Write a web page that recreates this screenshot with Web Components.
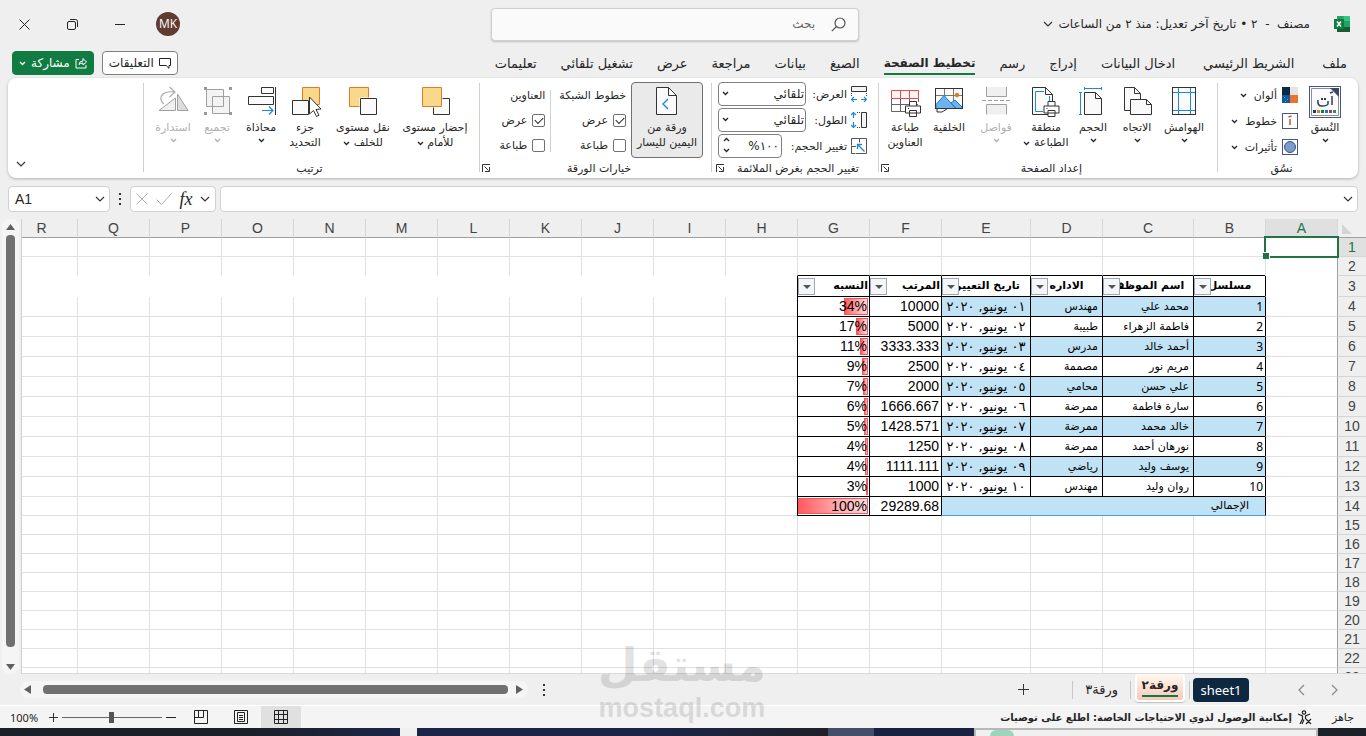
<!DOCTYPE html>
<html lang="ar" dir="rtl">
<head>
<meta charset="utf-8">
<title>مصنف ٢</title>
<style>
html,body{margin:0;height:100%}
body{font-family:"DejaVu Sans","Noto Sans",sans-serif;font-size:12px;color:#262626;background:#efefef;overflow:hidden}
</style>
</head>
<body>
<excel-app></excel-app>
<script>
const BASE = `<style>
*{box-sizing:border-box}
button,input,select{font:inherit;color:inherit;margin:0;padding:0;border:0;background:none}
button{display:flex;align-items:center;justify-content:center;white-space:nowrap}
a{color:inherit;text-decoration:none}
:host{display:block}
</style>`;
function define(name, html, setup) {
  const t = document.createElement('template');
  t.innerHTML = BASE + html;
  customElements.define(name, class extends HTMLElement {
    constructor() {
      super();
      this.attachShadow({mode: 'open'});
    }
    connectedCallback() {
      if (this.shadowRoot.firstChild) return;
      this.shadowRoot.append(t.content.cloneNode(true));
      if (setup) setup(this, this.shadowRoot);
    }
  });
}

/* ---- icons: [width, height, markup] ---- */
const printer = (x, y) => `<g transform="translate(${x} ${y})" fill="#fff" stroke="#333"><path d="M4.500 5V.500h7V5M.500 5h15v7H.500zM4.500 9.500h7v6h-7z"/><path d="M3 7.500h1"/></g>`;
const ICONS = {
  excel: [16,16,'<path d="M3 0h13v16H3z" fill="#21a366"/><path d="M9.500 0H16v5H9.500z" fill="#33c481"/><path d="M3 5h6.500v6H3z" fill="#107c41"/><path d="M3 11h13v5H3z" fill="#185c37"/><path d="M0 3h10v10H0z" fill="#107c41"/><path d="M3 5.500l4 5M7 5.500l-4 5" stroke="#fff" stroke-width="1.500"/>'],
  down: [10,6,'<path d="M1 1l4 4 4-4" fill="none" stroke="#333" stroke-width="1.200"/>'],
  mini: [7,5,'<path d="M1 1l2.500 2.500L6 1" fill="none" stroke="currentColor" stroke-width="1.300"/>'],
  miniup: [7,5,'<path d="M1 4l2.500-2.500L6 4" fill="none" stroke="currentColor" stroke-width="1.300"/>'],
  search: [15,15,'<g fill="none" stroke="#555" stroke-width="1.200"><circle cx="9" cy="6" r="5"/><path d="M5.500 9.500L.800 14.200"/></g>'],
  close: [11,11,'<path d="M.500.500l10 10M10.500.500l-10 10" stroke="#222"/>'],
  restore: [11,11,'<g fill="none" stroke="#222"><rect x=".500" y="2.500" width="8" height="8" rx="1.500"/><path d="M3 .500h5.500q2 0 2 2V8"/></g>'],
  min: [10,1,'<path d="M0 0h10v1H0z" fill="#222"/>'],
  share: [12,12,'<path d="M4 2.500H1v8.500h10V8M4 7.500q0-3.500 4-3.500V1.500L11.500 5 8 8V6Q5.500 6 4 7.500z" fill="none" stroke="#fff"/>'],
  comment: [12,11,'<path d="M.500.500h11v7H10v2.800L7.200 7.500H.500z" fill="none" stroke="#222"/>'],
  plus: [11,11,'<path d="M5.500 0v11M0 5.500h11" stroke="#333"/>'],
  prev: [7,12,'<path d="M6 1L1 6l5 5" fill="none" stroke="#888" stroke-width="1.200"/>'],
  next: [7,12,'<path d="M1 1l5 5-5 5" fill="none" stroke="#888" stroke-width="1.200"/>'],
  dots: [2,12,'<path d="M0 0h2v2H0zM0 5h2v2H0zM0 10h2v2H0z" fill="#333"/>'],
  cancel: [12,12,'<path d="M.500.500l11 11M11.500.500l-11 11" stroke="#b0b0b0"/>'],
  check: [16,12,'<path d="M.500 6.500l5 5L15.500.500" fill="none" stroke="#b0b0b0"/>'],
  launch: [8,8,'<path d="M.500 8V.500H8M2.500 2.500l4 4M7.500 3v4.500H3" fill="none" stroke="#333"/>'],
  themes: [32,32,'<rect x=".500" y=".500" width="31" height="31" fill="#fff" stroke="#4a5578"/><path d="M2.500 2.500h20l7 7v20h-27z" fill="#fafafa" stroke="#8890a8"/><path d="M21 2h9v9z" fill="#3c4468"/><g fill="none" stroke="#2f3a5f" stroke-width="1.500"><path d="M9 14q-1 6 4 6t6-2v-3M23 10v9M21 7l3-1"/></g><path d="M12 12h2v2h-2zM15 12h2v2h-2z" fill="#2f3a5f"/><path d="M4 24h3v3H4z" fill="#0b3d91"/><path d="M8 24h3v3H8z" fill="#e07b22"/><path d="M12 24h3v3h-3z" fill="#107c41"/><path d="M16 24h3v3h-3z" fill="#1f77c8"/><path d="M20 24h3v3h-3z" fill="#a03c64"/><path d="M24 24h3v3h-3z" fill="#3a8a50"/>'],
  colors: [16,16,'<path d="M0 0h8v8H0z" fill="#0e2841"/><path d="M8 0h8v8H8z" fill="#e4e4e4"/><path d="M0 8h8v8H0z" fill="#14589c"/><path d="M8 8h8v8H8z" fill="#e97132"/><path d="M2 10h1v1H2zM5 12h1v1H5zM3 14h1v1H3z" fill="#3c9"/>'],
  fonts: [16,16,'<rect x=".500" y=".500" width="15" height="15" fill="#fff" stroke="#4a5578"/><path d="M8 6v6M6.500 4l3-1" stroke="#c05a20" stroke-width="1.500"/>'],
  effects: [16,16,'<rect x=".500" y=".500" width="15" height="15" fill="#fff" stroke="#4a5578"/><circle cx="8" cy="8" r="5.500" fill="#7d9cc9" stroke="#2b5797"/>'],
  margins: [32,32,'<rect x="4.500" y="1.500" width="23" height="27" fill="#fafafa" stroke="#333"/><path d="M10.500 2v26M22.500 2v26M5 6.500h22M5 24.500h22" stroke="#1e88d8"/>'],
  orient: [32,32,'<g fill="#fafafa" stroke="#333"><path d="M3.500 24.500v-23h10l6 6v17z"/><path d="M13.500 1.500v6h6" fill="none"/><path d="M9.500 13.500h16l5 5v10h-21z"/><path d="M25.500 13.500v5h5" fill="none"/></g>'],
  size: [32,32,'<g fill="#fafafa" stroke="#333"><path d="M7.500 6.500h11l6 6v16h-17z"/><path d="M18.500 6.500v6h6" fill="none"/></g><path d="M7 2.500h17M7.500 1v3M24.500 1v3M3.500 6v23M2 6.500h3M2 28.500h3" stroke="#1e88d8"/>'],
  printarea: [32,32,'<path d="M2.500 1.500h13l7 7v20h-20z" fill="#fafafa" stroke="#333"/><path d="M15.500 1.500v7h7" fill="none" stroke="#333"/><path d="M14 5.500H5.500v20H13M19.500 10v5" fill="none" stroke="#1e88d8"/>' + printer(13.5,15)],
  breaks: [32,32,'<path d="M6.500 1v9.500h20V1M6.500 28.500v-10h20v10" fill="#f0f0f0" stroke="#a0a0a0"/><path d="M2 14.500h29" stroke="#a0a0a0" stroke-dasharray="4 2"/>'],
  picture: [32,32,'<rect x="2.500" y="2.500" width="27" height="20" fill="#fafafa" stroke="#333"/><path d="M11.500 3v19M20.500 3v19M3 9.500h26" stroke="#777"/><circle cx="24" cy="9" r="2.200" fill="#e07b22"/><path d="M3 18.500l8-9 12 13H3zM18 17l4-3 7 7v1.500H23z" fill="#6cb4f0" stroke="#1e78c8"/><path d="M2.500 3v19.500h27V3M4 23l0 3h5l5-3" fill="none" stroke="#333"/>'],
  titles: [32,32,'<path d="M2.500 12.500v13H16M11.500 13v12M3 18.500h26M20.500 13v5M29.500 13v3" fill="none" stroke="#666"/><path d="M2.500 4.500h27v8h-27zM11.500 5v7M20.500 5v7" fill="#fff5f5" stroke="#f04848"/>' + printer(16,15)],
  forward: [32,32,'<path d="M14.500 12.500h16v16h-16z" fill="#fafafa" stroke="#333"/><path d="M2.500 .500h21v21h-21z" fill="#fff"/><path d="M3.500 1.500h19v19h-19z" fill="#f8d98c" stroke="#e07b22"/>'],
  backward: [32,32,'<path d="M2.500 1.500h19v19h-19z" fill="#f8d98c" stroke="#e07b22"/><path d="M12.500 11.500h18v18h-18z" fill="#fff"/><path d="M13.500 12.500h16v16h-16z" fill="#fafafa" stroke="#333"/>'],
  pane: [32,32,'<path d="M13.500 1.500h17v17h-17z" fill="#f8d98c" stroke="#e07b22"/><path d="M3.500 14.500h16v14h-16z" fill="#fafafa" stroke="#333"/><path d="M20.500 11v17l4-3.500 3 6 2.500-1.300-3-5.700 5-.500z" fill="#fff" stroke="#333"/>'],
  align: [32,32,'<path d="M16.500 1.500h12v6h-12zM3.500 10.500h25v8h-25z" fill="#fafafa" stroke="#333"/><path d="M30.500 1v28" stroke="#333"/><path d="M17 24.500h11M24 20.500l4 4-4 4" fill="none" stroke="#1e88d8" stroke-width="1.200"/>'],
  group: [32,32,'<path d="M5.500 3.500h17v17h-17zM11.500 10.500h17v17h-17z" fill="#eee" fill-opacity=".7" stroke="#a0a0a0"/><path d="M3 1h3v3H3zM28 1h3v3h-3zM3 26h3v3H3zM28 26h3v3h-3z" fill="#999"/>'],
  rotate: [32,32,'<path d="M2 24.500L18.500 12v12.500z" fill="#f0f0f0" stroke="#a0a0a0"/><path d="M20.500 24.500V8l10.500 16.500z" fill="#ddd" stroke="#a0a0a0"/><path d="M7 18Q1 13 6 8q4-3 11-2M12.500 1L18 6l-5.500 5" fill="none" stroke="#aaa" stroke-width="1.200"/>'],
  rtl: [32,32,'<path d="M5.500 1.500h12l8 8v19h-20z" fill="#fafafa" stroke="#333"/><path d="M17.500 1.500v8h8" fill="none" stroke="#333"/><path d="M17 13l-5 5 5 5" fill="none" stroke="#1e88d8" stroke-width="1.400"/>'],
  wide: [16,16,'<path d="M.500.500h15v5H.500z" fill="#f4f4f4" stroke="#333"/><path d="M.500 7v1M.500 9v1M15.500 7v1M15.500 9v1" stroke="#333"/><path d="M0 13.500h6M10 13.500h6M3 11L.500 13.500 3 16M13 11l2.500 2.500L13 16" fill="none" stroke="#1e88d8" stroke-width="1.200"/>'],
  tall: [16,16,'<path d="M10.500.500h5v15h-5z" fill="#f4f4f4" stroke="#333"/><path d="M6 .500h1M8 .500h1M6 15.500h1M8 15.500h1" stroke="#333"/><path d="M2.500 0v6M2.500 10v6M0 3L2.500.500 5 3M0 13l2.500 2.500L5 13" fill="none" stroke="#1e88d8" stroke-width="1.200"/>'],
  scale: [16,16,'<path d="M.500 7.500V.500h8v4M8.500.500h7v15h-11M.500 8v7.500H4M0 8.500h5" fill="none" stroke="#555"/><path d="M13.500 13.500L6.500 6.500M6.500 11V6.500H11" fill="none" stroke="#1e88d8" stroke-width="1.300"/>'],
  normal: [14,14,'<path d="M.500.500h13v13H.500zM4.500.500v13M9.500.500v13M0 4.500h14M0 9.500h14" fill="none" stroke="#222"/>'],
  layout: [14,14,'<path d="M.500.500h13v13H.500zM3.500 2.500h7v9h-7zM5 5.500h4M5 7.500h4M5 9.500h4" fill="none" stroke="#222"/>'],
  breakview: [14,14,'<path d="M.500.500h13v13H.500zM4.500 .500v7H.500M9.500.500v7H4.500" fill="none" stroke="#222"/>'],
  access: [15,15,'<g fill="none" stroke="#222" stroke-width="1.200"><circle cx="7" cy="2.500" r="1.700"/><path d="M1 4l4.500 2v3L3 14M13 4L8.500 6v3M7 9.500L5 14M9 9l5 5M14 9l-5 5"/></g>'],
  tri: [10,10,'<path d="M0 0l10 10H0z" fill="#d4d4d4"/>'],
  up: [9,6,'<path d="M4.500 0L9 6H0z" fill="#606060"/>'],
  dn: [9,6,'<path d="M4.500 6L9 0H0z" fill="#606060"/>'],
  lf: [7,9,'<path d="M0 4.500L7 0v9z" fill="#606060"/>'],
  rt: [7,9,'<path d="M7 4.500L0 0v9z" fill="#606060"/>'],
};
define('x-icon', '<style>:host{display:inline-flex;flex:none}svg{display:block}</style>', (el, root) => {
  const [w, h, m] = ICONS[el.getAttribute('name')];
  const d = document.createElement('div');
  d.innerHTML = `<svg width="${w}" height="${h}" viewBox="0 0 ${w} ${h}" aria-hidden="true">${m}</svg>`;
  root.append(d);
});
const prependIcon = (el, root) => {
  const i = document.createElement('x-icon');
  i.setAttribute('name', el.getAttribute('icon'));
  root.querySelector('button').prepend(i);
};

/* ---- title bar ---- */
define('title-bar', `<style>
:host{display:grid;grid-template-columns:1fr 368px 1fr;align-items:center;height:48px;padding-right:16px}
.doc{display:flex;align-items:center;gap:8px;white-space:nowrap;justify-content:flex-start}
.doc button{gap:6px;white-space:pre}
.doc>x-icon{margin-left:16px}
label{display:flex;align-items:center;gap:16px;height:33px;padding:0 12px;background:#fafafa;border:1px solid #d0d0d0;border-radius:4px;box-shadow:0 1px 2px #0003}
input{flex:1;min-width:0;outline:0}input::placeholder{color:#666;opacity:1}
.win{display:flex;justify-content:flex-end;align-items:center}
.win button{width:48px;height:48px}
.av{width:24px;height:24px;border-radius:50%;background:#5f3b32;color:#fff;font-family:"Open Sans",sans-serif;display:block;line-height:24px;text-align:center}
</style>
<div class="doc"><x-icon name="excel"></x-icon><button><span>مصنف  -  ٢ • تاريخ آخر تعديل: منذ ٢ من الساعات</span><x-icon name="down"></x-icon></button></div>
<label><x-icon name="search"></x-icon><input placeholder="بحث" aria-label="بحث"></label>
<div class="win"><button><span class="av">MK</span></button><button aria-label="تصغير"><x-icon name="min"></x-icon></button><button aria-label="استعادة"><x-icon name="restore"></x-icon></button><button aria-label="إغلاق"><x-icon name="close"></x-icon></button></div>`);

/* ---- ribbon tabs ---- */
define('ribbon-tabs', `<style>
:host{display:flex;align-items:center;justify-content:space-between;height:30px;padding:0 19px 0 12px}
nav{display:flex;gap:24px}
a{height:24px;line-height:25px;font-size:13px;white-space:nowrap}
.far{margin-left:4px}
a.on{font-size:12px;font-weight:bold;border-bottom:2px solid #107c41}
.acts{display:flex;gap:8px}
.acts button{height:24px;gap:5px;padding:0 6px;border-radius:4px;border:1px solid #808080;background:#fff}
.acts .share{background:#107c41;color:#fff;border-color:#107c41}
</style>
<nav><a href="#" class="far">ملف</a><a href="#" class="far">الشريط الرئيسي</a><a href="#">ادخال البيانات</a><a href="#">إدراج</a><a href="#">رسم</a><a href="#" class="on">تخطيط الصفحة</a><a href="#">الصيغ</a><a href="#">بيانات</a><a href="#">مراجعة</a><a href="#">عرض</a><a href="#">تشغيل تلقائي</a><a href="#">تعليمات</a></nav>
<div class="acts"><button><x-icon name="comment"></x-icon>التعليقات</button><button class="share"><x-icon name="share"></x-icon>مشاركة<x-icon name="mini"></x-icon></button></div>`);

/* ---- ribbon pieces ---- */
define('ribbon-group', `<style>
:host{display:grid;grid-template-rows:76px 1fr;padding:4px 8px 0 5px;position:relative;font-size:11px}
:host::after{content:"";position:absolute;left:0;top:5px;bottom:6px;width:1px;background:#d0d0d0}
.in{display:flex}
.cap{display:flex;align-items:center;height:20px}
.cap span{flex:1;text-align:center}
:host([launcher]) .cap{margin-left:-2px}
:host([launcher]) span{padding-left:5px}
</style><div class="in"><slot></slot></div><div class="cap"><span></span></div>`, (el, root) => {
  root.querySelector('span').textContent = el.getAttribute('label');
  if (el.hasAttribute('launcher')) root.querySelector('.cap').insertAdjacentHTML('beforeend', '<button aria-label="المزيد"><x-icon name="launch"></x-icon></button>');
});
define('ribbon-button', `<style>
:host{display:block;flex:none}
button{flex-direction:column;justify-content:flex-start;width:100%;height:76px;padding-top:4px;border-radius:4px}
:host([disabled]) button{color:#b0b0b0}
:host([pressed]) button{background:#eaeaea;border:1px solid #707070;padding-top:3px}
span{line-height:15px;margin-top:2px;text-align:center}
.c{margin-top:3px}
</style><button><span><slot></slot></span></button>`, (el, root) => {
  prependIcon(el, root);
  if (el.hasAttribute('menu')) root.querySelector('button').insertAdjacentHTML('beforeend', '<x-icon class="c" name="mini"></x-icon>');
  if (el.hasAttribute('disabled')) root.querySelector('button').disabled = true;
});
define('small-button', `<style>button{gap:5px;height:26px}.m{margin-right:2px}</style><button><slot></slot><x-icon class="m" name="mini"></x-icon></button>`, prependIcon);
define('check-option', `<style>
label{display:flex;align-items:center;gap:5px;height:25px}
input{appearance:none;width:13px;height:13px;border:1px solid #707070;border-radius:2px;background:#fff;display:grid;place-items:center}
input:checked::after{content:"";width:7px;height:4px;border:solid #222;border-width:0 0 1px 1px;transform:translateY(-1px) rotate(-45deg)}
</style><label><input type="checkbox"><slot></slot></label>`, (el, root) => {
  root.querySelector('input').checked = el.hasAttribute('checked');
});
define('scale-options', `<style>
:host{flex:1;display:grid;grid-template-rows:repeat(3,24px);gap:2px}
.r{display:flex;align-items:center;gap:4px;white-space:nowrap}
.r label{flex:1}
.f{position:relative;width:88px;height:24px}
.f.n{width:64px}
select,input{appearance:none;width:100%;height:24px;border:1px solid #808080;border-radius:4px;background:#fff;padding:0 1px 0 16px;font-size:12px}
input{text-align:right;direction:ltr;padding:0 2px 0 14px}
.f>x-icon{position:absolute;left:4px;top:9px;pointer-events:none}
.sp{position:absolute;left:5px;top:3px;display:grid;gap:6px}
</style>
<div class="r"><x-icon name="wide"></x-icon><label for="w">العرض:</label><div class="f"><select id="w"><option>تلقائي</option></select><x-icon name="mini"></x-icon></div></div>
<div class="r"><x-icon name="tall"></x-icon><label for="h">الطول:</label><div class="f"><select id="h"><option>تلقائي</option></select><x-icon name="mini"></x-icon></div></div>
<div class="r"><x-icon name="scale"></x-icon><label for="s">تغيير الحجم:</label><div class="f n"><input id="s" value="%١٠٠"><div class="sp"><button aria-label="زيادة"><x-icon name="miniup"></x-icon></button><button aria-label="إنقاص"><x-icon name="mini"></x-icon></button></div></div></div>`);
define('ribbon-bar', `<style>
:host{display:flex;height:100px;margin:0 8px;background:#fff;border-radius:8px;box-shadow:0 1px 3px #0004}
.g1{width:141px;padding-right:17px}.g2{width:339px}.g3{width:167px;padding-right:11px;padding-left:7px}.g4{width:232px}.g5{width:336px}
.w50{width:50px}.w44{width:44px}.w72{width:72px}
.col{display:grid;align-content:start}
.smalls{padding-right:11px;justify-items:start}
.vsep{width:1px;background:#d0d0d0;height:62px;margin-top:8px}
.opts{padding:1px 5px 0 8px}
.opts h4{margin:0;font-weight:normal;height:25px;line-height:26px;white-space:nowrap}
.end{flex:1;display:flex;justify-content:flex-end;align-items:flex-end;padding:11px 8px}
</style>
<ribbon-group class="g1" label="نسُق"><ribbon-button icon="themes" menu>النُسق</ribbon-button><div class="col smalls"><small-button icon="colors">ألوان</small-button><small-button icon="fonts">خطوط</small-button><small-button icon="effects">تأثيرات</small-button></div></ribbon-group>
<ribbon-group class="g2" label="إعداد الصفحة" launcher>
<ribbon-button class="w50" icon="margins" menu>الهوامش</ribbon-button>
<ribbon-button class="w44" icon="orient" menu>الاتجاه</ribbon-button>
<ribbon-button class="w44" icon="size" menu>الحجم</ribbon-button>
<ribbon-button class="w50" icon="printarea">منطقة<br>الطباعة <x-icon name="mini"></x-icon></ribbon-button>
<ribbon-button class="w50" icon="breaks" menu disabled>فواصل</ribbon-button>
<ribbon-button class="w44" icon="picture">الخلفية</ribbon-button>
<ribbon-button class="w44" icon="titles">طباعة<br>العناوين</ribbon-button>
</ribbon-group>
<ribbon-group class="g3" label="تغيير الحجم بغرض الملائمة" launcher><scale-options></scale-options></ribbon-group>
<ribbon-group class="g4" label="خيارات الورقة" launcher>
<ribbon-button class="w72" icon="rtl" pressed>ورقة من<br>اليمين لليسار</ribbon-button>
<div class="col opts"><h4>خطوط الشبكة</h4><check-option checked>عرض</check-option><check-option>طباعة</check-option></div>
<div class="vsep"></div>
<div class="col opts"><h4>العناوين</h4><check-option checked>عرض</check-option><check-option>طباعة</check-option></div>
</ribbon-group>
<ribbon-group class="g5" label="ترتيب">
<ribbon-button class="w72" icon="forward">إحضار مستوى<br>للأمام <x-icon name="mini"></x-icon></ribbon-button>
<ribbon-button class="w72" icon="backward">نقل مستوى<br>للخلف <x-icon name="mini"></x-icon></ribbon-button>
<ribbon-button class="w44" icon="pane">جزء<br>التحديد</ribbon-button>
<ribbon-button class="w44" icon="align" menu>محاذاة</ribbon-button>
<ribbon-button class="w44" icon="group" menu disabled>تجميع</ribbon-button>
<ribbon-button class="w44" icon="rotate" menu disabled>استدارة</ribbon-button>
</ribbon-group>
<div class="end"><button aria-label="طي الشريط"><x-icon name="down"></x-icon></button></div>`);

/* ---- formula bar ---- */
define('formula-bar', `<style>
:host{display:flex;direction:ltr;gap:4px;padding:8px 8px 7px;align-items:stretch}
.b{display:flex;align-items:center;height:26px;background:#fff;border:1px solid #d0d0d0;border-radius:4px}
.name{width:102px;padding:0 4px 0 6px}
input{flex:1;min-width:0;width:0;outline:0;font-family:"Liberation Sans",sans-serif;font-size:14px}
.d{width:12px;display:grid;place-items:center}
.fx{width:86px;justify-content:space-around;padding:0 1px}
.fx i{font:italic 18px/20px "Liberation Serif",serif}
.main{flex:1;padding:0 4px}
</style>
<div class="b name"><input value="A1" aria-label="مربع الاسم"><x-icon name="down"></x-icon></div>
<div class="d"><x-icon name="dots"></x-icon></div>
<div class="b fx"><x-icon name="cancel"></x-icon><x-icon name="check"></x-icon><i>fx</i><x-icon name="down"></x-icon></div>
<div class="b main"><input aria-label="شريط الصيغة"><x-icon name="down"></x-icon></div>`);

/* ---- worksheet ---- */
const HEAD = ['مسلسل','اسم الموظف','الاداره','تاريخ التعيين','المرتب','النسبه'];
const ROWS = [
  ['محمد علي','مهندس','٠١','10000',34],['فاطمة الزهراء','طبيبة','٠٢','5000',17],['أحمد خالد','مدرس','٠٣','3333.333',11],
  ['مريم نور','مصممة','٠٤','2500',9],['علي حسن','محامي','٠٥','2000',7],['سارة فاطمة','ممرضة','٠٦','1666.667',6],
  ['خالد محمد','ممرضة','٠٧','1428.571',5],['نورهان أحمد','ممرضة','٠٨','1250',4],['يوسف وليد','رياضي','٠٩','1111.111',4],['روان وليد','مهندس','١٠','1000',3]];
define('sheet-grid', `<style>
:host{display:flex;flex:1;min-height:0;overflow:hidden}
.view{flex:1;min-width:0;overflow:hidden;border-left:1px solid #d0d0d0;border-bottom:1px solid #dadada;background:#fff}
table{width:max(100%,1361px);table-layout:fixed;border-spacing:0;font:14px "Liberation Sans","DejaVu Sans",sans-serif;color:#000}
th,td{padding:0;height:19px;overflow:hidden;white-space:nowrap;line-height:18px;border:0 solid #e0e0e0;border-width:0 0 1px 1px;position:relative}
th{background:#efefef;font-weight:normal;color:#444}
thead th{border-bottom-color:#9f9f9f;border-left-color:#d6d6d6}
tbody th{border-left-color:#9f9f9f;border-bottom-color:#d6d6d6}
thead .on,tbody .on{background:#e0e0e0;color:#217346}
thead .on{border-bottom-color:#217346}
tr.h3>*{height:21px}tr.d>*{height:20px;line-height:19px}
.nb td{border-bottom-color:#fff}
.nb.h3 td:not(.k){border-left-color:#fff}
td.k,.nb td.kb{border-color:#000}
td.kl,.nb.h3 td.kl{border-left-color:#000}
tr.even td.s{background:#c0e2f5}
td.ar{font:11px/19px "DejaVu Sans",sans-serif;text-align:right;padding-right:4px}
td.ar.c{text-align:center;padding:0;font-size:13px}
td.hd{font:bold 11px/20px "DejaVu Sans",sans-serif;text-align:center}
td.hd.r{text-align:right;padding-right:1px}
td.n{text-align:right;padding-right:2px;direction:ltr}
td.sn{text-align:right;direction:ltr;padding-right:2px;font:12px/19px "Noto Sans",sans-serif}
td.hd button{position:absolute;left:0;top:2px;width:17px;height:17px;border:1px solid #a0a8b4;background:#f4f6fa}
td.hd button::after{content:"";border:4px solid transparent;border-top-color:#555;border-bottom:0}
.bar{position:absolute;right:1px;top:1px;bottom:1px;border:1px solid #ff5358;background:linear-gradient(90deg,#ff5a5f,#ffb0b2 60%,#ffdcdc)}
td.n span{position:relative}
td.tot{background:#c0e2f5;border-bottom-color:#4a9fd8;border-left-color:#000;padding-right:16px;line-height:18px}
td.sel{overflow:visible;z-index:1}
td.sel i{position:absolute;inset:-2px;border:2px solid #217346}
td.sel i::after{content:"";position:absolute;left:-3px;bottom:-3px;width:6px;height:6px;background:#217346;border:solid #fff;border-width:1px 1px 0 0}
.corner x-icon{position:absolute;right:14px;top:5px}
.vs{width:17px;margin:0 2px;padding:5px 0 4px;border-radius:8px;background:#f5f5f5;display:flex;flex-direction:column;align-items:center;gap:5px}
.vs i{width:9px;border-radius:4px;background:#707070;flex:1}
.vs .e{margin-top:12px}
</style><div class="view"><table></table></div><div class="vs"><x-icon name="up"></x-icon><i></i><x-icon class="e" name="dn"></x-icon></div>`, (el, root) => {
  const w = [29,72,72,91,72,89,72,72,72,72,72,72,72,72,72,72,72,72];
  const L = 'ABCDEFGHIJKLMNOPQR';
  let h = '<colgroup>' + w.map(x => `<col style="width:${x}px">`).join('') + '<col></colgroup><thead><tr><th class="corner"><x-icon name="tri"></x-icon></th>' + [...L].map(c => `<th class="${c === 'A' ? 'on' : ''}">${c}</th>`).join('') + '</tr></thead><tbody>';
  const blank = n => '<td></td>'.repeat(n);
  for (let r = 1; r <= 23; r++) {
    let c = '', cls = '';
    if (r === 1) c = '<td class="sel"><i></i></td>' + blank(17);
    else if (r === 2) { cls = 'nb'; c = '<td></td>' + '<td class="kb2"></td>'.repeat(6) + blank(11); }
    else if (r === 3) { cls = 'nb h3'; c = '<td class="kl k0"></td>' + HEAD.map((t, i) => `<td class="k hd${i > 3 ? ' r' : ''}">${t}<button aria-label="تصفية"></button></td>`).join('') + blank(11); }
    else if (r < 14) {
      const [a, b, d, s, p] = ROWS[r - 4];
      cls = 'd' + (r % 2 ? '' : ' even');
      c = `<td class="kl"></td><td class="k s sn">${r - 3}</td><td class="k s ar">${a}</td><td class="k s ar">${b}</td><td class="k s ar c">${d} يونيو, ٢٠٢٠</td><td class="k n">${s}</td><td class="k n"><div class="bar" style="width:${p}%"></div><span>${p}%</span></td>` + blank(11);
    } else if (r === 14) c = '<td class="kl"></td><td class="ar tot" colspan="4">الإجمالي</td><td class="k n">29289.68</td><td class="k n"><div class="bar" style="width:98%"></div><span>100%</span></td>' + blank(11);
    else c = blank(18);
    h += `<tr class="${cls}"><th class="${r === 1 ? 'on' : ''}">${r}</th>${c}</tr>`;
  }
  root.querySelector('table').innerHTML = '<style>.nb td.kb2{border-bottom-color:#000}.nb.h3 td.k0{border-left-color:#000}</style>' + h + '</tbody>';
});

/* ---- sheet tabs ---- */
define('sheet-tabs', `<style>
:host{display:flex;align-items:center;height:31px;flex:none;padding:0 28px 0 20px}
.nav{display:flex;gap:26px;margin-left:49px}
.t{height:24px;padding:0 8px;border-radius:4px}
.s1{background:#0e2841;color:#fff;font:13px "Noto Sans",sans-serif;margin-left:3px;width:56px;padding:0}
.on{width:50px;height:28px;margin:0 4px;padding:0;align-self:flex-start;font-weight:bold;background:linear-gradient(#fffaf0,#f8c8b8);border:2px solid #fff;border-top:0;box-shadow:0 1px 1px #0003}
.on span{border-bottom:2px solid #107c41;height:20px;line-height:16px}
i{width:1px;height:18px;background:#c8c8c8}
.w{padding:0 12px;font-size:13px}
.add{margin-right:43px}
.sp{flex:1}
.hs{width:508px;height:17px;border-radius:8px;background:#f5f5f5;display:flex;direction:ltr;align-items:center;gap:8px;padding:0 5px 0 4px}
.hs b{flex:1;height:9px;border-radius:4px;background:#707070;margin-left:4px}
.dots{margin-left:15px}
</style>
<div class="nav"><button aria-label="السابق"><x-icon name="next"></x-icon></button><button aria-label="التالي"><x-icon name="prev"></x-icon></button></div>
<button class="t s1">sheet1</button><i></i><button class="t on"><span>ورقة٢</span></button><i></i><button class="w">ورقة٣</button><i></i>
<button class="add" aria-label="ورقة جديدة"><x-icon name="plus"></x-icon></button><div class="sp"></div>
<x-icon class="dots" name="dots"></x-icon><div class="hs"><x-icon name="lf"></x-icon><b></b><x-icon name="rt"></x-icon></div>`);

/* ---- status bar ---- */
define('status-bar', `<style>
:host{display:flex;align-items:center;height:23px;flex:none;background:#f4f4f4;border-top:1px solid #fff;padding:0 12px 0 10px;font-size:11px;white-space:nowrap}
.acc{font-size:10px;font-weight:bold;gap:5px;margin-right:20px}
.sp{flex:1}
.v{width:40px;height:22px}.v.on{background:#e0e0e0}
.z{display:flex;align-items:center;gap:4px;margin-right:5px}
.z button{width:10px}
input{appearance:none;width:100px;height:11px;background:linear-gradient(#666,#666) center/100% 1px no-repeat}
input::-webkit-slider-thumb{appearance:none;width:5px;height:11px;background:#555}
.p{margin-right:10px;font:11px "Noto Sans",sans-serif}
</style>
<span>جاهز</span><button class="acc"><x-icon name="access"></x-icon>إمكانية الوصول لذوي الاحتياجات الخاصة: اطلع على توصيات</button><div class="sp"></div>
<button class="v on" aria-label="عادي"><x-icon name="normal"></x-icon></button><button class="v" aria-label="تخطيط الصفحة"><x-icon name="layout"></x-icon></button><button class="v" aria-label="فواصل الصفحات"><x-icon name="breakview"></x-icon></button>
<div class="z"><button aria-label="تصغير"><x-icon name="min"></x-icon></button><input type="range" aria-label="التكبير" min="0" max="100" value="51"><button aria-label="تكبير"><svg width="9" height="9"><path d="M4.500 0v9M0 4.500h9" stroke="#333"/></svg></button></div><span class="p" dir="ltr">100%</span>`);

/* ---- strip of the desktop below the window ---- */
define('desk-strip', `<style>
:host{display:flex;direction:ltr;height:8px;flex:none;background:#1b2029}
.a{width:400px;background:linear-gradient(90deg,#1b1f27 60%,#1c2547)}
.b{width:17px;background:#f0f0f0}
.c{width:411px;background:linear-gradient(90deg,#1c2547 60%,#1f2028)}
.d{width:46px;background:#454d68}
.e{width:100px;background:#1a2040}
.f{width:344px;background:#f0f0f0;border:solid #b8b8b8;border-width:2px 2px 0}
.f i{display:block;width:24px;height:6px;margin-left:14px;border-radius:8px 8px 0 0;background:#9fd4bc}
</style><div class="a"></div><div class="b"></div><div class="c"></div><div class="d"></div><div class="e"></div><div class="f"><i></i></div>`);

/* ---- watermark ---- */
define('water-mark', `<style>
:host{position:absolute;left:600px;bottom:14px;width:166px;text-align:center;color:#000;opacity:.11;pointer-events:none;display:grid;justify-items:center}
.a{font:bold 46px/58px "DejaVu Sans",sans-serif}
.b{font:bold 27px/28px "Liberation Sans",sans-serif;direction:ltr}
</style><span class="a">مستقل</span><span class="b">mostaql.com</span>`);

define('excel-app', `<style>:host{display:flex;flex-direction:column;height:100vh;position:relative}</style>
<title-bar></title-bar><ribbon-tabs></ribbon-tabs><ribbon-bar></ribbon-bar><formula-bar></formula-bar>
<sheet-grid></sheet-grid><sheet-tabs></sheet-tabs><status-bar></status-bar><desk-strip></desk-strip><water-mark></water-mark>`);
</script>
</body>
</html>
